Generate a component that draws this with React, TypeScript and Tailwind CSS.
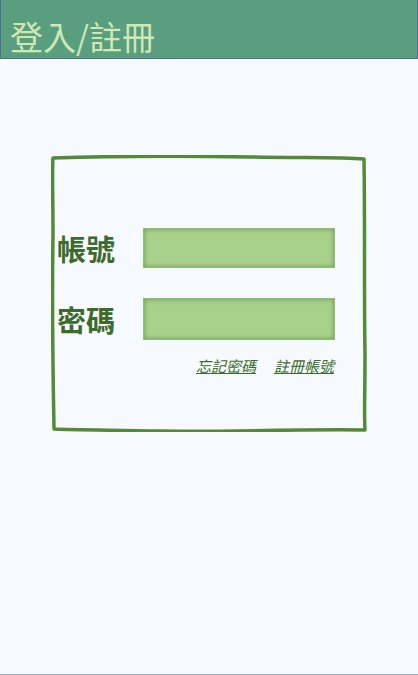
export default function App() {
  return (
    <div
      className="w-[418px] h-[675px] bg-[#f6faff] flex flex-col border-b border-[#9fb3cc]"
      style={{ fontFamily: '"Noto Sans CJK TC", "Noto Sans", sans-serif' }}
    >
      <header className="h-[59px] bg-[#599e7f] border border-t-0 border-[#4d6f93] flex items-end px-[9px] pb-[3px]">
        <h1 className="text-[33px] leading-[38px] text-[#cfe8b4] font-normal">登入/註冊</h1>
      </header>

      <div className="relative ml-[51px] mt-[96px] w-[316px] h-[277px]">
        <svg className="absolute inset-0" width="316" height="277" viewBox="0 0 316 277" fill="none">
          <path
            d="M2 3 C60 1 140 1 200 2 C250 3 290 2 313 4 C314 60 313 140 314 200 C314 240 313 260 314 275 C250 274 180 277 110 276 C60 275 25 275 3 274 C2 220 1 140 2 80 C2 40 1 15 2 3 Z"
            stroke="#528a37"
            strokeWidth="3.5"
            strokeLinejoin="round"
          />
        </svg>

        <div className="relative flex flex-col pl-[6px] pt-[73px]">
          <div className="flex items-center">
            <label className="w-[86px] text-[29px] leading-[32px] font-bold text-[#3e6a2c]">帳號</label>
            <input className="w-[192px] h-[40px] bg-[#a8d18c] border border-[#8cbf73] shadow-[inset_0_0_5px_rgba(60,110,40,0.6)] outline-none" />
          </div>
          <div className="flex items-center mt-[30px]">
            <label className="w-[86px] text-[29px] leading-[32px] font-bold text-[#3e6a2c]">密碼</label>
            <input
              type="password"
              className="w-[192px] h-[42px] bg-[#a8d18c] border border-[#8cbf73] shadow-[inset_0_0_5px_rgba(60,110,40,0.6)] outline-none"
            />
          </div>
          <div className="flex justify-end gap-[18px] pr-[33px] mt-[17px] text-[15px] leading-[18px] italic text-[#3e6a2c]">
            <a className="underline">忘記密碼</a>
            <a className="underline">註冊帳號</a>
          </div>
        </div>
      </div>
    </div>
  );
}
